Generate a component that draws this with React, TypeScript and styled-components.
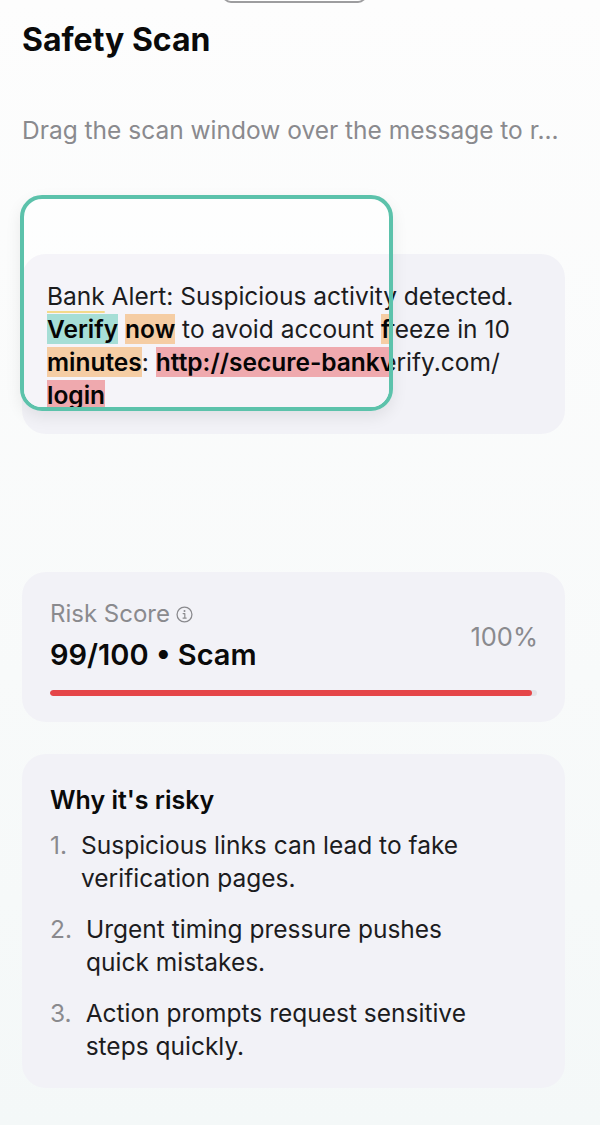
import React from "react";
import styled, { createGlobalStyle } from "styled-components";

const GlobalStyle = createGlobalStyle`
  html, body {
    margin: 0;
    padding: 0;
  }
  body {
    font-family: Inter, "Liberation Sans", "Noto Sans", sans-serif;
    background: linear-gradient(180deg, #fdfdfd 0%, #f8fafa 60%, #f4f8f8 100%);
    min-height: 1125px;
    color: #111;
    -webkit-font-smoothing: antialiased;
  }
`;

const Page = styled.div`
  position: relative;
  width: 600px;
  min-height: 1125px;
  box-sizing: border-box;
  padding: 22px 35px 0 22px;
  overflow: hidden;
`;

const Grabber = styled.div`
  position: absolute;
  top: -15px;
  left: 222px;
  width: 145px;
  height: 18px;
  box-sizing: border-box;
  border: 2px solid #9d9d9f;
  border-radius: 12px;
  background: #fff;
`;

const Title = styled.h1`
  margin: 0;
  font-size: 32px;
  line-height: 36px;
  font-weight: 700;
  color: #0a0a0a;
`;

const Subtitle = styled.p`
  margin: 58px 0 0;
  font-size: 24.5px;
  line-height: 28px;
  color: #8a8a8e;
  white-space: nowrap;
`;

const ScanArea = styled.div`
  position: relative;
  margin-top: 51px;
  padding-top: 59px;
`;

const MessageCard = styled.div<{ $lens?: boolean }>`
  box-sizing: border-box;
  width: 543px;
  height: 180px;
  padding: 26px 20px 22px 25px;
  border-radius: 24px;
  background: ${(p) => (p.$lens ? "#f5f4f9" : "#f2f2f7")};
  font-size: 24.5px;
  line-height: 33px;
  color: #1c1c1e;
  white-space: nowrap;
`;

const ScanWindow = styled.div`
  position: absolute;
  top: 0;
  left: -2px;
  width: 373px;
  height: 216px;
  box-sizing: border-box;
  border: 4px solid #5cc2ab;
  border-radius: 22px;
  background: rgba(255, 255, 255, 0.55);
  box-shadow: 0 6px 16px rgba(0, 0, 0, 0.08);
  overflow: hidden;
`;

const LensLayer = styled.div`
  position: absolute;
  top: 55px;
  left: -2px;
`;

type Tone = "teal" | "orange" | "pink";

const toneColors: Record<Tone, string> = {
  teal: "#a6ded6",
  orange: "#f5cda4",
  pink: "#efa9ae",
};

const Mark = styled.span<{ $tone: Tone }>`
  font-weight: 600;
  color: #050505;
  background: ${(p) => toneColors[p.$tone]};
`;

const Underlined = styled.span`
  text-decoration: underline;
  text-decoration-color: #f4da8a;
  text-decoration-thickness: 2px;
  text-underline-offset: 6px;
`;

const Card = styled.div`
  box-sizing: border-box;
  width: 543px;
  border-radius: 24px;
  background: #f2f2f7;
`;

const RiskCard = styled(Card)`
  margin-top: 138px;
  padding: 28px 28px 26px;
`;

const RiskRow = styled.div`
  display: flex;
  align-items: center;
  justify-content: space-between;
`;

const RiskLabel = styled.div`
  display: flex;
  align-items: center;
  gap: 6px;
  font-size: 24px;
  line-height: 28px;
  color: #8a8a8e;
`;

const RiskValue = styled.div`
  margin-top: 10px;
  font-size: 29px;
  line-height: 34px;
  font-weight: 600;
  color: #0a0a0a;
`;

const Percent = styled.div`
  font-size: 25.5px;
  color: #8a8a8e;
  margin-right: -1px;
`;

const Track = styled.div`
  margin-top: 18px;
  height: 6px;
  border-radius: 3px;
  background: #e3e3e8;
  overflow: hidden;
`;

const Fill = styled.div`
  height: 100%;
  border-radius: 3px;
  background: #e54649;
`;

const WhyCard = styled(Card)`
  margin-top: 32px;
  padding: 32px 28px 25px;
`;

const WhyTitle = styled.h2`
  margin: 0;
  font-size: 25px;
  line-height: 28px;
  font-weight: 600;
  color: #0a0a0a;
`;

const ReasonList = styled.ol`
  list-style: none;
  margin: 15px 0 0;
  padding: 0;
  display: flex;
  flex-direction: column;
  gap: 18px;
`;

const Reason = styled.li`
  display: flex;
  gap: 14px;
  font-size: 24.5px;
  line-height: 33px;
  color: #1c1c1e;
`;

const ReasonNumber = styled.span`
  color: #8a8a8e;
`;

function InfoIcon() {
  return (
    <svg width="17" height="17" viewBox="0 0 16 16" fill="none">
      <circle cx="8" cy="8" r="7" stroke="#8a8a8e" strokeWidth="1.2" />
      <circle cx="8" cy="4.8" r="0.95" fill="#8a8a8e" />
      <path
        d="M6.7 7.1H8.3V11.3M6.6 11.4H9.6"
        stroke="#8a8a8e"
        strokeWidth="1.1"
        strokeLinecap="round"
        strokeLinejoin="round"
      />
    </svg>
  );
}

function PlainMessage() {
  return (
    <MessageCard>
      Bank Alert: Suspicious activity detected.
      <br />
      Verify now to avoid account freeze in 10
      <br />
      minutes: http://secure-bankverify.com/
      <br />
      login
    </MessageCard>
  );
}

function LensMessage() {
  return (
    <MessageCard $lens>
      <Underlined>Bank</Underlined> Alert: Suspicious activity detected.
      <br />
      <Mark $tone="teal">Verify</Mark> <Mark $tone="orange">now</Mark> to avoid account{" "}
      <Mark $tone="orange">freeze</Mark> in 10
      <br />
      <Mark $tone="orange">minutes</Mark>: <Mark $tone="pink">http://secure-bankverify.com/</Mark>
      <br />
      <Mark $tone="pink">login</Mark>
    </MessageCard>
  );
}

const reasons = [
  ["Suspicious links can lead to fake", "verification pages."],
  ["Urgent timing pressure pushes", "quick mistakes."],
  ["Action prompts request sensitive", "steps quickly."],
];

export default function App() {
  const score = 99;
  return (
    <>
      <GlobalStyle />
      <Page>
        <Grabber />
        <Title>Safety Scan</Title>
        <Subtitle>Drag the scan window over the message to r...</Subtitle>

        <ScanArea>
          <PlainMessage />
          <ScanWindow>
            <LensLayer>
              <LensMessage />
            </LensLayer>
          </ScanWindow>
        </ScanArea>

        <RiskCard>
          <RiskRow>
            <div>
              <RiskLabel>
                Risk Score <InfoIcon />
              </RiskLabel>
              <RiskValue>{score}/100 • Scam</RiskValue>
            </div>
            <Percent>100%</Percent>
          </RiskRow>
          <Track>
            <Fill style={{ width: `${score}%` }} />
          </Track>
        </RiskCard>

        <WhyCard>
          <WhyTitle>Why it's risky</WhyTitle>
          <ReasonList>
            {reasons.map((lines, i) => (
              <Reason key={i}>
                <ReasonNumber>{i + 1}.</ReasonNumber>
                <span>
                  {lines[0]}
                  <br />
                  {lines[1]}
                </span>
              </Reason>
            ))}
          </ReasonList>
        </WhyCard>
      </Page>
    </>
  );
}
